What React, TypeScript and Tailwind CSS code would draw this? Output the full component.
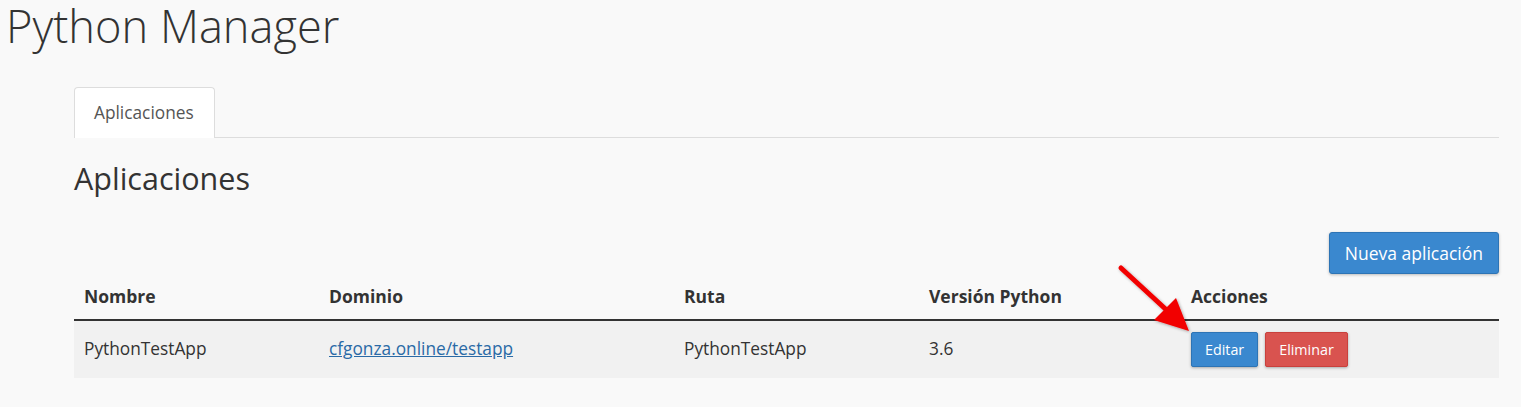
import React from 'react';

const cols = 'grid grid-cols-[245px_355px_245px_262px_1fr]';

export default function App() {
  return (
    <div className="relative min-h-[407px] bg-[#f9f9f9] text-[#333] font-['Open_Sans',sans-serif]">
      <h1 className="pl-[6px] text-[45.2px] font-light leading-[52px] text-[#333]">Python Manager</h1>

      <div className="ml-[74px] mr-[22px]">
        {/* Tabs */}
        <div className="mt-[35px] flex border-b border-[#ddd]">
          <div className="-mb-px rounded-t-[4px] border border-b-0 border-[#ddd] bg-white pl-[19px] pr-[20px] py-[13px] text-[17.3px] leading-[24px] text-[#555]">
            Aplicaciones
          </div>
        </div>

        <h2 className="mt-[24px] text-[30.5px] leading-[1.1] font-normal text-[#333]">Aplicaciones</h2>

        <div className="mt-[36px] flex justify-end">
          <button className="rounded-[3px] border border-[#2d74b5] bg-[#3a88cf] px-[15px] py-[8px] text-[17.5px] leading-[24px] text-white shadow-[0_1px_3px_rgba(0,0,0,0.25)]">
            Nueva aplicación
          </button>
        </div>

        {/* Table */}
        <div>
          <div className={`${cols} border-b-2 border-[#333] text-[17.5px] leading-[24px] font-bold`}>
            <div className="px-[10px] pt-[10px] pb-[11px]">Nombre</div>
            <div className="px-[10px] pt-[10px] pb-[11px]">Dominio</div>
            <div className="px-[10px] pt-[10px] pb-[11px]">Ruta</div>
            <div className="px-[10px] pt-[10px] pb-[11px]">Versión Python</div>
            <div className="px-[10px] pt-[10px] pb-[11px]">Acciones</div>
          </div>
          <div className={`${cols} items-center bg-[#f1f1f1] text-[17.3px] leading-[24px]`}>
            <div className="px-[10px]">PythonTestApp</div>
            <div className="px-[10px]">
              <a href="#" className="text-[#2a6aa6] underline">cfgonza.online/testapp</a>
            </div>
            <div className="px-[10px]">PythonTestApp</div>
            <div className="px-[10px]">3.6</div>
            <div className="flex gap-[7px] px-[10px] py-[11px]">
              <button className="rounded-[2px] border border-[#2d74b5] bg-[#3a88cf] px-[13px] py-[6px] text-[14.3px] leading-[21px] text-white shadow-[0_1px_3px_rgba(0,0,0,0.3)]">
                Editar
              </button>
              <button className="rounded-[2px] border border-[#c9403c] bg-[#d9534f] px-[13px] py-[6px] text-[14.3px] leading-[21px] text-white shadow-[0_1px_3px_rgba(0,0,0,0.3)]">
                Eliminar
              </button>
            </div>
          </div>
        </div>
      </div>

      {/* red arrow annotation */}
      <svg className="pointer-events-none absolute left-[1110px] top-[258px]" width="90" height="85" viewBox="0 0 90 85">
        <defs>
          <filter id="sh" x="-20%" y="-20%" width="140%" height="140%">
            <feDropShadow dx="1" dy="1" stdDeviation="1.5" floodColor="#000" floodOpacity="0.35" />
          </filter>
        </defs>
        <g filter="url(#sh)">
          <line x1="11" y1="10" x2="62" y2="57" stroke="#f20000" strokeWidth="5" strokeLinecap="round" />
          <polygon points="79,73 44,62 66,40" fill="#f20000" />
        </g>
      </svg>
    </div>
  );
}
